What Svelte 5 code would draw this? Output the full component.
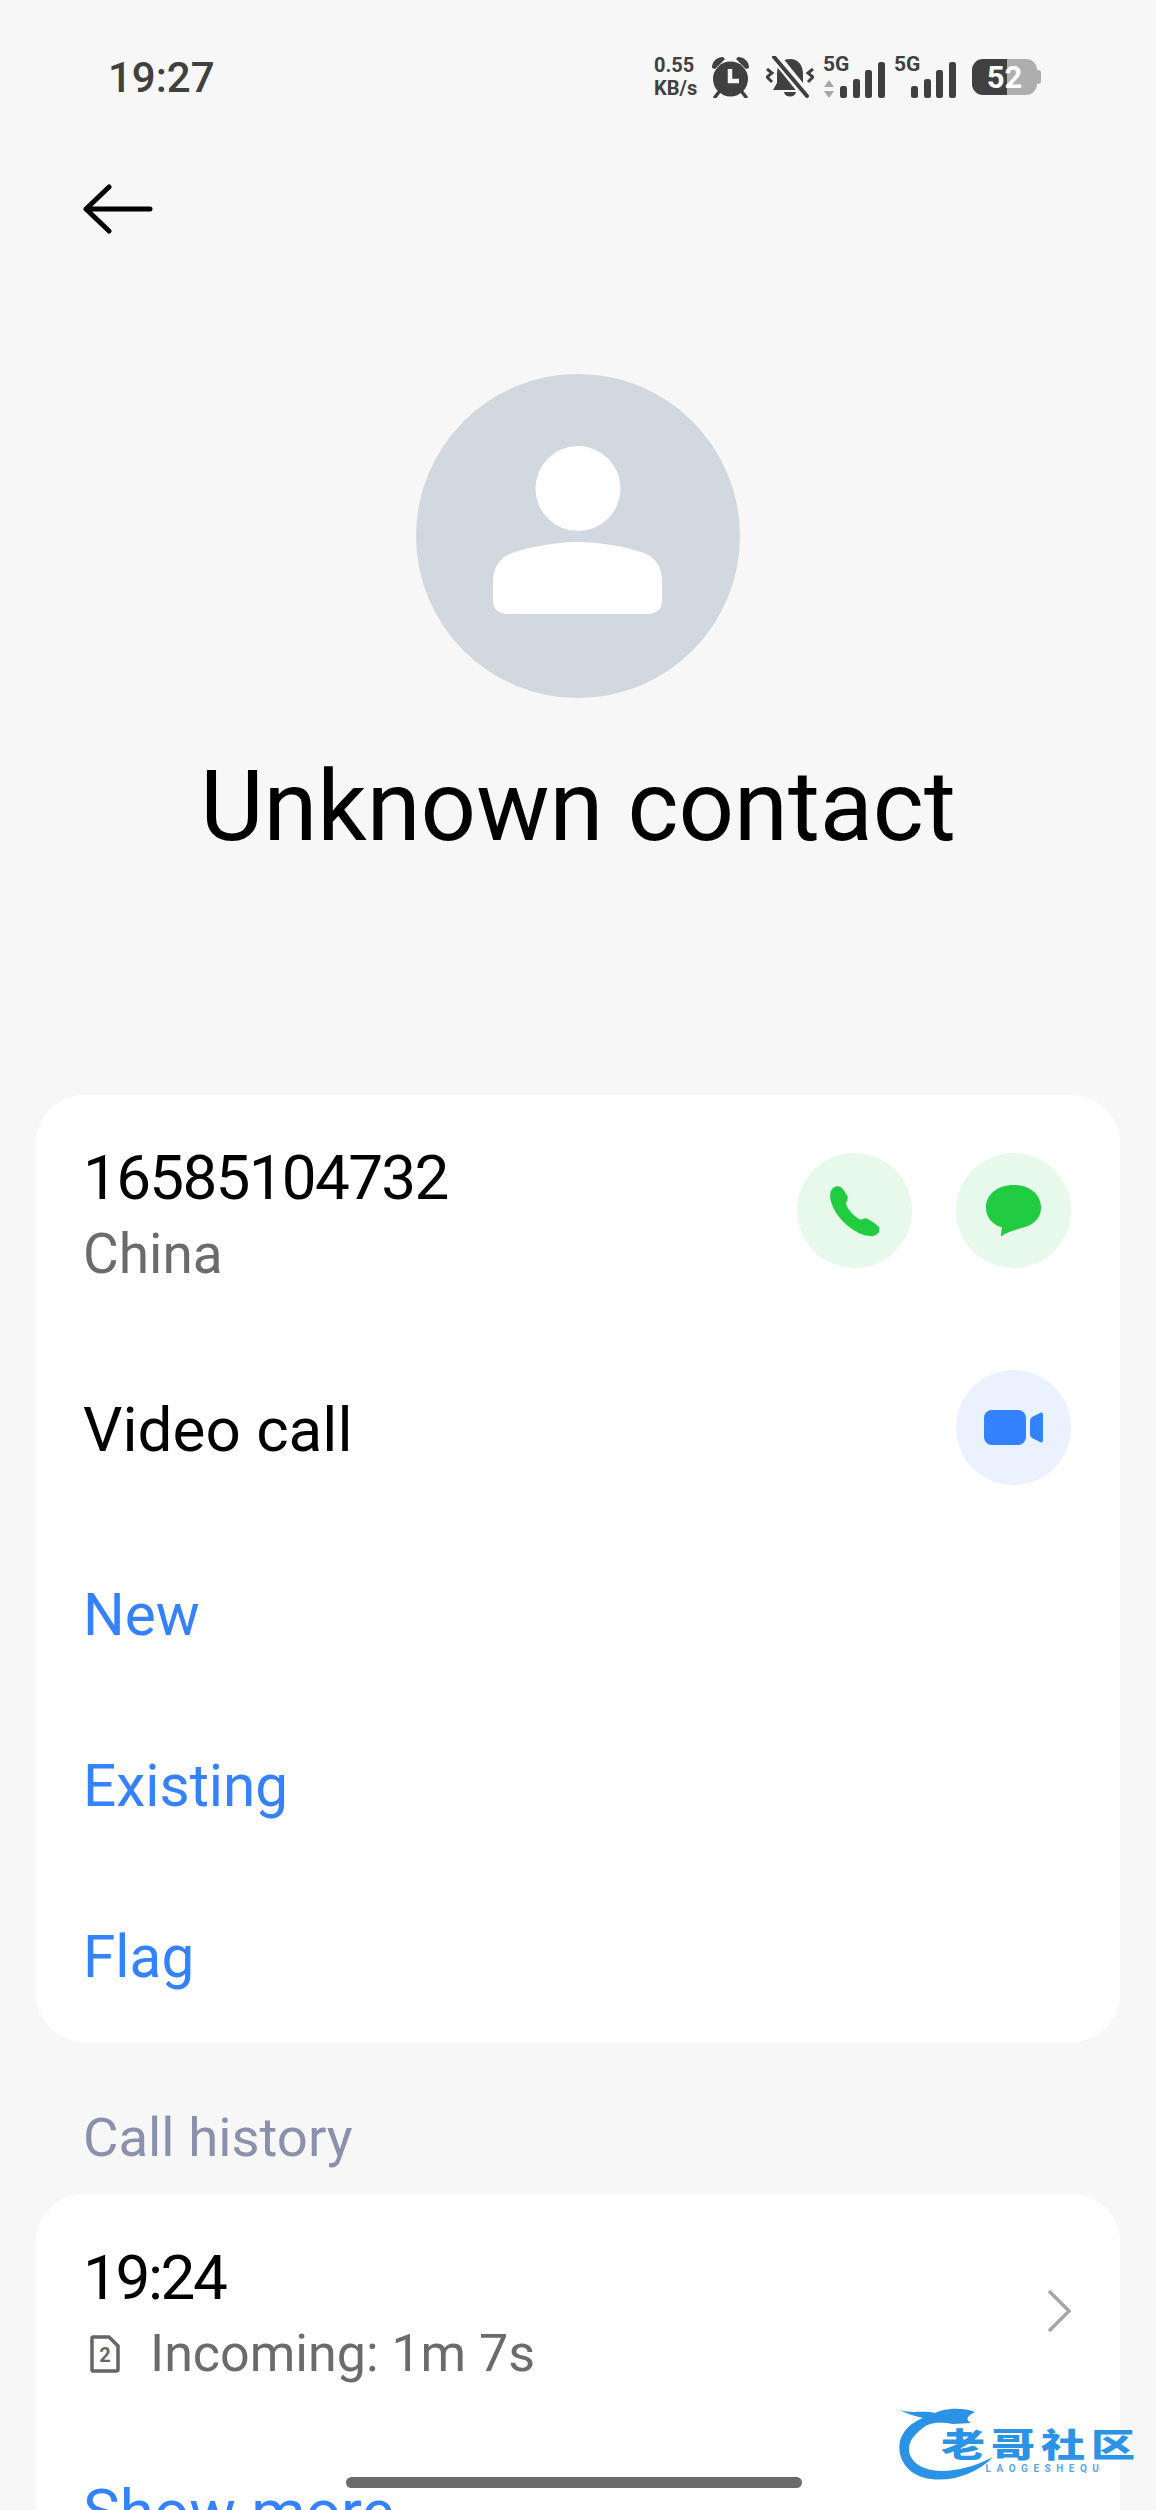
<script>
  const links = ['New', 'Existing', 'Flag'];
  const barHeights = [12, 19, 28, 36];
</script>

<div class="page">
  <header class="status">
    <span class="clock">19:27</span>
    <div class="status-icons">
      <div class="speed"><span>0.55</span><span>KB/s</span></div>
      <svg class="alarm" viewBox="0 0 37 42" width="37" height="42">
        <circle cx="18.5" cy="23" r="17.500" fill="#404040" />
        <path d="M0 12 C0 5 5 1 11 1 L13 3 L3 13 Z M37 12 C37 5 32 1 26 1 L24 3 L34 13 Z" fill="#404040" />
        <path d="M7 36 L3 41 M30 36 L34 41" stroke="#404040" stroke-width="3.500" stroke-linecap="round" />
        <path d="M18 13 V25 H27" fill="none" stroke="#f7f7f7" stroke-width="4.500" />
      </svg>
      <svg class="bell" viewBox="0 0 48 42" width="48" height="42">
        <path d="M24 3 C15 3 11 10 11 18 V27 L7 34 H41 L37 27 V18 C37 10 33 3 24 3 Z M18 36 H30 C29 42 19 42 18 36 Z" fill="#404040" />
        <path d="M8 -1 L41 40" stroke="#f7f7f7" stroke-width="10" />
        <path d="M8 1 L41 40" stroke="#404040" stroke-width="4" stroke-linecap="round" />
        <path d="M1 13 L6 17 L1 21 L6 26 M47 13 L42 17 L47 21 L42 26" fill="none" stroke="#404040" stroke-width="3" />
      </svg>
      <div class="signal">
        <span class="net">5G</span>
        <svg class="arrows" viewBox="0 0 10 18" width="10" height="18">
          <path d="M5 0 L10 7 H0 Z M0 11 H10 L5 18 Z" fill="#a8a8a8" />
        </svg>
        <div class="bars">
          {#each barHeights as h}
            <i style="height: {h}px"></i>
          {/each}
        </div>
      </div>
      <div class="signal second">
        <span class="net">5G</span>
        <div class="bars">
          {#each barHeights as h}
            <i style="height: {h}px"></i>
          {/each}
        </div>
      </div>
      <div class="battery">
        <div class="cell"><span>52</span></div>
        <div class="nub"></div>
      </div>
    </div>
  </header>

  <button class="back" aria-label="Back">
    <svg viewBox="0 0 70 50" width="70" height="50">
      <path d="M3 25 H67 M26 3 L3 25 L26 47" fill="none" stroke="#000" stroke-width="5" stroke-linecap="round" stroke-linejoin="round" />
    </svg>
  </button>

  <section class="hero">
    <svg class="avatar" viewBox="0 0 324 324" width="324" height="324">
      <circle cx="162" cy="162" r="162" fill="#d2d8e0" />
      <circle cx="162" cy="114.500" r="42.500" fill="#fff" />
      <path d="M77 207 C77 193 85 183 96 179 C118 172 140 168 162 168 C184 168 206 172 228 179 C239 183 246 193 246 207 V227 C246 235 240 240 232 240 H91 C83 240 77 235 77 227 Z" fill="#fff" />
    </svg>
    <h1>Unknown contact</h1>
  </section>

  <section class="card contact">
    <div class="row">
      <div class="number">
        <div class="primary digits">16585104732</div>
        <div class="secondary">China</div>
      </div>
      <div class="actions">
        <button class="round green" aria-label="Call">
          <svg viewBox="0 0 150 150" width="50" height="50">
            <path d="M3 14 C8 3 22 -3 32 3 C40 8 44 18 52 30 C56 38 50 44 48 52 C50 66 68 88 88 100 C96 104 102 94 112 98 C124 104 136 112 146 122 C152 132 146 146 132 149 C112 152 88 146 62 126 C30 102 8 72 1 38 C0 28 0 20 3 14 Z" fill="#22cc40" />
          </svg>
        </button>
        <button class="round green" aria-label="Message">
          <svg viewBox="0 0 55 52" width="55" height="52">
            <path d="M27.500 0 C43 0 55 9 55 22.500 C55 32 49 39 39 42 C31 44.500 22 46.500 15 51.500 C15 48 15.500 45 16 42.500 C6 39.500 0 32 0 22.500 C0 9 12 0 27.500 0 Z" fill="#22cc40" />
          </svg>
        </button>
      </div>
    </div>
    <div class="row video">
      <div class="primary label">Video call</div>
      <button class="round blue" aria-label="Video call">
        <svg viewBox="0 0 59 36" width="59" height="36">
          <rect x="0" y="0" width="42" height="35" rx="8" fill="#3482ff" />
          <path d="M46 11 C46 9 47 8 48 7 L56 3 C58 2 59 3 59 5 V30 C59 32 58 33 56 32 L48 28 C47 27 46 26 46 24 Z" fill="#3482ff" />
        </svg>
      </button>
    </div>
    <div class="links">
      {#each links as link}
        <a href="#top">{link}</a>
      {/each}
    </div>
  </section>

  <h2>Call history</h2>

  <section class="card history">
    <div class="call">
      <div>
        <div class="primary digits time">19:24</div>
        <div class="secondary detail">
          <svg viewBox="0 0 30 38" width="30" height="38">
            <path d="M3 2 H19 L28 11 V35 C28 36 27 36 26 36 H3 C2 36 2 36 2 35 V3 C2 2 2 2 3 2 Z" fill="none" stroke="#666" stroke-width="3.500" />
            <text x="15" y="27" text-anchor="middle" class="sim">2</text>
          </svg>
          <span>Incoming: 1m 7s</span>
        </div>
      </div>
      <svg class="chevron" viewBox="0 0 24 44" width="24" height="44">
        <path d="M2 2 L22 22 L2 42" fill="none" stroke="#a6a6a6" stroke-width="3.500" />
      </svg>
    </div>
    <a class="more" href="#top">Show more</a>
  </section>

  <div class="homebar"></div>

  <div class="watermark">
    <svg viewBox="0 0 130 85" width="130" height="85">
      <path d="M3 6 C14 10 26 6 38 9 C48 4 66 3 78 8 C70 12 68 16 74 19 L56 20 C44 18 32 18 26 24 C12 34 8 46 16 56 C26 70 60 72 96 53 C80 70 54 78 34 75 C8 72 -2 50 4 34 C8 24 16 18 26 14 C18 12 10 10 3 6 Z" fill="#2b93e6" />
    </svg>
    <div class="wm-text">
      <span class="wm-cn">老哥社区</span>
      <span class="wm-en">LAOGESHEQU</span>
    </div>
  </div>
</div>

<style>
  :global(body) {
    margin: 0;
    background: #f7f7f7;
  }

  .page {
    position: relative;
    height: 2510px;
    overflow: hidden;
    background: #f7f7f7;
    font-family: Roboto, "Noto Sans CJK SC", sans-serif;
    color: #000;
  }

  .status {
    display: flex;
    justify-content: space-between;
    align-items: center;
    height: 42px;
    padding: 56px 115px 0 108px;
  }

  .clock {
    font-size: 42px;
    font-weight: 500;
    color: #404040;
  }

  .status-icons {
    display: flex;
    align-items: center;
    color: #404040;
  }

  .speed {
    display: flex;
    flex-direction: column;
    width: 58px;
    font-size: 20px;
    font-weight: 700;
    line-height: 23px;
  }

  .bell {
    margin-left: 17px;
  }

  .signal {
    position: relative;
    width: 62px;
    height: 42px;
    margin-left: 9px;
  }

  .net {
    position: absolute;
    left: 0;
    top: -4px;
    font-size: 21px;
    font-weight: 700;
  }

  .arrows {
    position: absolute;
    left: 1px;
    top: 24px;
  }

  .bars {
    position: absolute;
    right: 0;
    bottom: 0;
    display: flex;
    align-items: flex-end;
    gap: 5.700px;
  }

  .bars i {
    display: block;
    width: 7px;
    border-radius: 2.500px;
    background: #404040;
  }

  .battery {
    display: flex;
    align-items: center;
    margin-left: 16px;
  }

  .cell {
    width: 65px;
    height: 36px;
    border-radius: 11px;
    background: linear-gradient(90deg, #404040 54%, #aeaeae 54%);
    display: flex;
    align-items: center;
    justify-content: center;
    color: #fff;
    font-size: 31px;
    font-weight: 700;
  }

  .nub {
    width: 4px;
    height: 14px;
    border-radius: 0 3px 3px 0;
    background: #aeaeae;
  }

  .back {
    display: block;
    margin: 86px 0 0 83px;
    padding: 0;
    border: 0;
    background: none;
    height: 50px;
  }

  .hero {
    display: flex;
    flex-direction: column;
    align-items: center;
    margin-top: 140px;
  }

  .avatar {
    display: block;
  }

  h1 {
    margin: 51px 0 0;
    font-size: 97.500px;
    line-height: 116px;
    font-weight: 400;
  }

  .card {
    margin: 0 36px;
    background: #fff;
    border-radius: 48px;
  }

  .contact {
    margin-top: 230px;
    padding-top: 58px;
    height: 889px;
  }

  .row {
    display: flex;
    justify-content: space-between;
    align-items: center;
    height: 115px;
    padding: 0 49px 0 47px;
  }

  .number {
    padding-top: 10px;
  }

  .video {
    margin-top: 102px;
  }

  .label {
    padding-top: 5px;
  }

  .actions {
    display: flex;
    gap: 44px;
  }

  .round {
    display: flex;
    align-items: center;
    justify-content: center;
    width: 115px;
    height: 115px;
    padding: 0;
    border: 0;
    border-radius: 50%;
  }

  .green {
    background: #e7f9ea;
  }

  .blue {
    background: #e9f2fe;
  }

  .primary {
    font-size: 62px;
    line-height: 76px;
  }

  .digits {
    letter-spacing: -1.700px;
  }

  .time {
    letter-spacing: -2.400px;
  }

  .secondary {
    font-size: 55px;
    line-height: 76px;
    color: #6b6b6b;
  }

  .links {
    display: flex;
    flex-direction: column;
    margin-top: 44px;
  }

  .links a {
    display: flex;
    align-items: center;
    height: 171px;
    padding-left: 47px;
    font-size: 58.500px;
    color: #3482ff;
    text-decoration: none;
  }

  h2 {
    margin: 64px 0 0 83px;
    font-size: 54.500px;
    line-height: 62px;
    font-weight: 400;
    color: #8b91ad;
  }

  .history {
    margin-top: 26px;
    padding: 46px 49px 0 47px;
    height: 400px;
  }

  .call {
    display: flex;
    justify-content: space-between;
    align-items: center;
  }

  .detail {
    display: flex;
    align-items: center;
    gap: 30px;
    padding-left: 7px;
    font-size: 52px;
  }

  .chevron {
    margin-bottom: 10px;
  }

  .sim {
    font-family: Roboto, sans-serif;
    font-size: 20px;
    font-weight: 700;
    fill: #666;
  }

  .more {
    display: block;
    margin-top: 84px;
    font-size: 62px;
    line-height: 72px;
    color: #3482ff;
    text-decoration: none;
  }

  .homebar {
    position: absolute;
    left: 346px;
    top: 2477px;
    width: 456px;
    height: 11px;
    border-radius: 6px;
    background: #6b6b6b;
  }

  .watermark {
    position: absolute;
    left: 897px;
    top: 2404px;
    width: 245px;
    height: 90px;
  }

  .watermark svg {
    display: block;
  }

  .wm-text {
    position: absolute;
    left: 46px;
    top: 24px;
    display: flex;
    flex-direction: column;
    align-items: center;
    width: 196px;
  }

  .wm-cn {
    font-size: 44px;
    line-height: 36px;
    font-weight: 900;
    letter-spacing: 6px;
    color: #2b93e6;
    white-space: nowrap;
    transform: scaleY(0.75);
  }

  .wm-en {
    font-size: 10px;
    line-height: 10px;
    letter-spacing: 5.500px;
    font-weight: 700;
    color: #5aa8e6;
    margin-left: 8px;
  }
</style>
